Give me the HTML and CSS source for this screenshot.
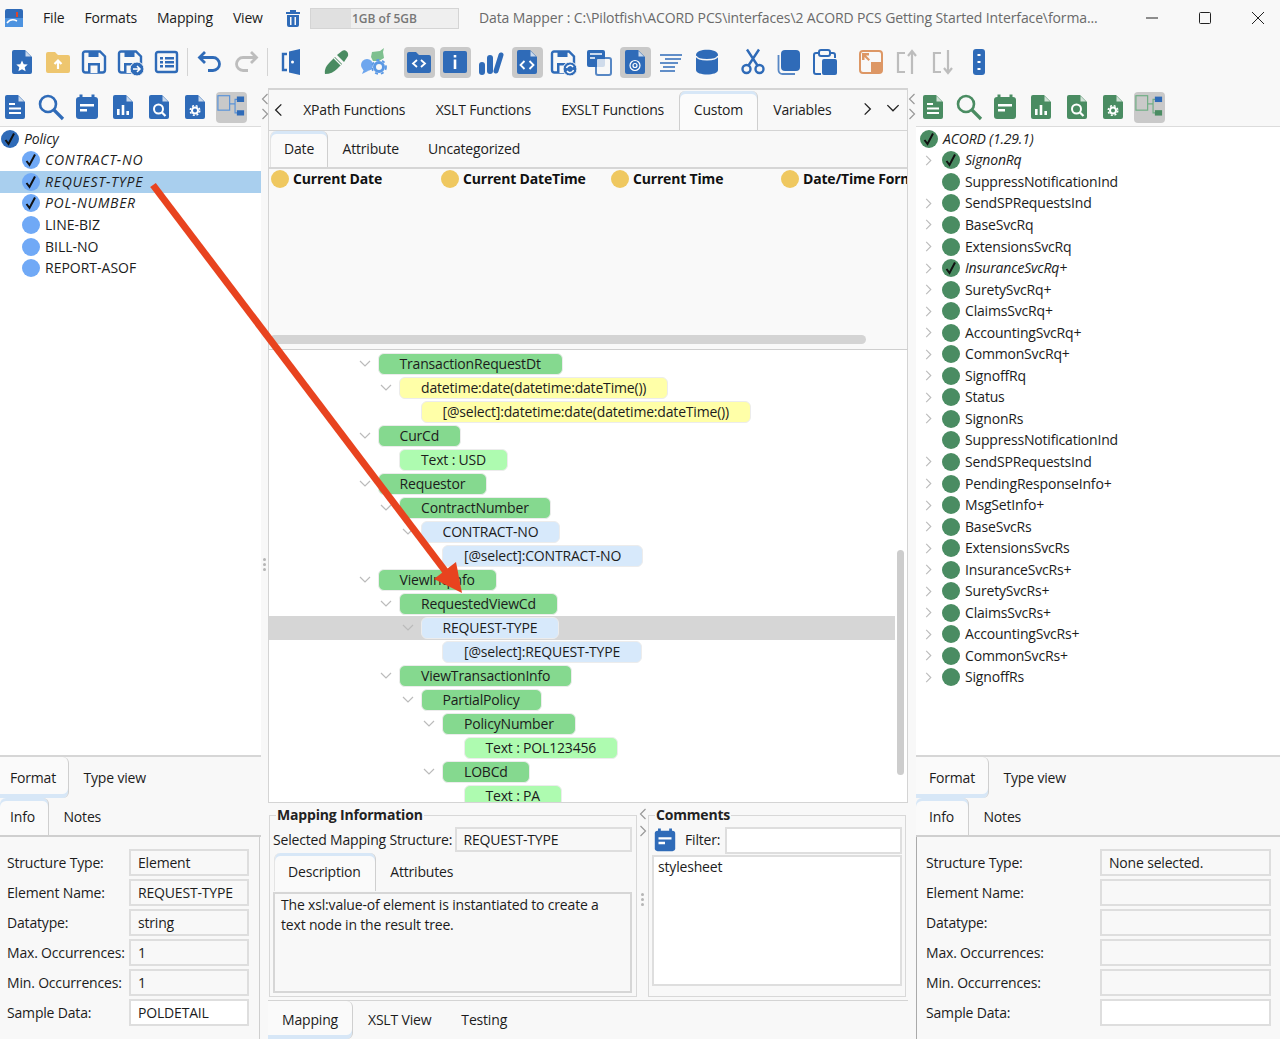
FILE: index.html
```html
<!DOCTYPE html>
<html lang="en">
<head>
  <meta charset="UTF-8" />
  <title>Data Mapper</title>
  <link rel="stylesheet" href="styles.css">
</head>
<body>
  <svg class="defs" width="0" height="0">
    <defs>
      <symbol id="dot" viewBox="0 0 18 18"><circle cx="9" cy="9" r="9" fill="currentColor"/></symbol>
      <symbol id="dot-check" viewBox="0 0 18 18"><circle cx="9" cy="9" r="9" fill="currentColor"/><path d="M4.5 10l3 4L13 3.5" fill="none" stroke="#111" stroke-width="2"/></symbol>
      <symbol id="chev-d" viewBox="0 0 12 8"><path d="M1 1l5 5 5-5" fill="none" stroke="currentColor" stroke-width="1.2"/></symbol>
      <symbol id="chev-r" viewBox="0 0 8 12"><path d="M1.5 1l5 5-5 5" fill="none" stroke="currentColor" stroke-width="1.2"/></symbol>
      <symbol id="chev-l" viewBox="0 0 8 12"><path d="M6.5 1l-5 5 5 5" fill="none" stroke="currentColor" stroke-width="1.2"/></symbol>

      <symbol id="file" viewBox="0 0 28 28"><path d="M6 2h11l7 7v15a2 2 0 0 1-2 2H6a2 2 0 0 1-2-2V4a2 2 0 0 1 2-2z" fill="currentColor"/><path d="M17.5 3l5.500 5.500h-5.500z" fill="#fff" opacity=".75"/></symbol>
      <symbol id="i-star" viewBox="0 0 28 28"><use href="#file"/><path d="M14 12.500l1.700 3.700 4 .4-3 2.700.9 3.900-3.600-2-3.600 2 .9-3.900-3-2.700 4-.4z" fill="#fff"/></symbol>
      <symbol id="i-folder" viewBox="0 0 28 28"><path d="M2 6a2 2 0 0 1 2-2h7l3 3h10a2 2 0 0 1 2 2v14a2 2 0 0 1-2 2H4a2 2 0 0 1-2-2z" fill="#eec66f"/><path d="M14 21v-8M10.500 16l3.500-3.500 3.500 3.500" fill="none" stroke="#fff" stroke-width="2.200"/></symbol>
      <symbol id="i-save" viewBox="0 0 28 28"><path d="M5 3.500h15l5 5V22a2.500 2.500 0 0 1-2.500 2.500h-17A2.500 2.500 0 0 1 3 22V5.500a2 2 0 0 1 2-2z" fill="none" stroke="currentColor" stroke-width="2.400"/><path d="M8.500 3h10v6h-10zM8 15h12v9H8z" fill="currentColor"/><path d="M10.500 17.500h7V25h-7z" fill="#f8f8f8"/></symbol>
      <symbol id="i-saveas" viewBox="0 0 28 28"><use href="#i-save"/><circle cx="21" cy="21" r="7" fill="currentColor" stroke="#f8f8f8"/><path d="M17 21h7M21 18l3 3-3 3" fill="none" stroke="#fff" stroke-width="1.500"/></symbol>
      <symbol id="i-savesync" viewBox="0 0 28 28"><use href="#i-save"/><circle cx="21" cy="21" r="7" fill="currentColor" stroke="#f8f8f8"/><path d="M17.500 20a3.600 3.600 0 0 1 6.500-1M24.500 22a3.600 3.600 0 0 1-6.500 1" fill="none" stroke="#fff" stroke-width="1.500"/></symbol>
      <symbol id="i-list" viewBox="0 0 28 28"><rect x="4" y="4" width="21" height="20" rx="2" fill="none" stroke="currentColor" stroke-width="2.400"/><path d="M8 9h3v2.500H8zM8 13h3v2.500H8zM8 17h3v2.500H8zM13 9h9v2.500h-9zM13 13h9v2.500h-9zM13 17h9v2.500h-9z" fill="currentColor"/></symbol>
      <symbol id="i-undo" viewBox="0 0 28 28"><path d="M9 4L3.500 9.500 9 15M4 9.500h13a6.500 6.500 0 0 1 0 13h-5" fill="none" stroke="currentColor" stroke-width="2.800"/></symbol>
      <symbol id="i-redo" viewBox="0 0 28 28"><path d="M19 4l5.500 5.500L19 15M24 9.500H11a6.500 6.500 0 0 0 0 13h5" fill="none" stroke="currentColor" stroke-width="2.800"/></symbol>
      <symbol id="i-door" viewBox="0 0 28 28"><path d="M10 6H6v16h4" fill="none" stroke="currentColor" stroke-width="2.400"/><path d="M12 3.500l11-2.500v26l-11-2.500z" fill="currentColor"/><circle cx="15.500" cy="14" r="1.500" fill="#fff"/></symbol>
      <symbol id="i-dropper" viewBox="0 0 28 28"><path d="M2 26c-1-5 2-9 5-12l5-5 7 7-5 5c-3 3-7 5-12 5z" fill="#4a8c62"/><path d="M14 7l5-4c3-2 7 1 6 5l-4 6z" fill="#4a8c62"/><path d="M11 10l7 7" stroke="#f8f8f8" stroke-width="1.200"/></symbol>
      <symbol id="i-chat" viewBox="0 0 28 28"><path d="M13 4l8-1 4-3-1 4 1 6-5 3h-6l-2-4z" fill="#7ec08f"/><circle cx="8" cy="17" r="6" fill="#6ea6ee"/><path d="M5 21l-2 5 6-3z" fill="#6ea6ee"/><circle cx="20" cy="19" r="4.500" fill="none" stroke="#5a98e4" stroke-width="3"/><circle cx="20" cy="19" r="7" fill="none" stroke="#5a98e4" stroke-width="1.800" stroke-dasharray="3 3"/></symbol>
      <symbol id="i-fcode" viewBox="0 0 28 28"><path d="M2 6a2 2 0 0 1 2-2h7l3 3h10a2 2 0 0 1 2 2v14a2 2 0 0 1-2 2H4a2 2 0 0 1-2-2z" fill="currentColor"/><path d="M12 12l-4 3.500 4 3.500M16 12l4 3.500-4 3.500" fill="none" stroke="#fff" stroke-width="1.800"/></symbol>
      <symbol id="i-info" viewBox="0 0 28 28"><rect x="2" y="3" width="24" height="22" rx="2" fill="currentColor"/><path d="M12.700 7h2.600v2.600h-2.600zM12.700 11.500h2.600V21h-2.600z" fill="#fff"/></symbol>
      <symbol id="i-bars" viewBox="0 0 28 28"><g fill="none" stroke="currentColor" stroke-linecap="round"><path d="M5 24v-7" stroke-width="6"/><path d="M13 23V10" stroke-width="6"/><path d="M19 23L24 7" stroke-width="5"/></g></symbol>
      <symbol id="i-filecode" viewBox="0 0 28 28"><use href="#file"/><path d="M11.500 13l-4 4 4 4M16.500 13l4 4-4 4" fill="none" stroke="#fff" stroke-width="1.800"/></symbol>
      <symbol id="i-docs" viewBox="0 0 28 28"><rect x="2" y="2" width="18" height="17" rx="2" fill="currentColor"/><path d="M5 6h12M5 10h5" stroke="#fff" stroke-width="1.500"/><rect x="11" y="10" width="15" height="17" rx="2" fill="#f8f8f8" stroke="currentColor" stroke-width="2" opacity=".8"/></symbol>
      <symbol id="i-fileat" viewBox="0 0 28 28"><use href="#file"/><circle cx="14" cy="17.500" r="5" fill="none" stroke="#fff" stroke-width="1.200"/><circle cx="14" cy="17.500" r="2" fill="none" stroke="#fff" stroke-width="1.200"/></symbol>
      <symbol id="i-lines" viewBox="0 0 28 28"><path d="M3 7h22M8 11h16M3 15h18M6 19h12M3 23h15" stroke="currentColor" stroke-width="1.300"/></symbol>
      <symbol id="i-db" viewBox="0 0 28 28"><path d="M3 7c0-7 22-7 22 0v15c0 6-22 6-22 0z" fill="currentColor"/><path d="M3 8c2 5 20 5 22 0" fill="none" stroke="#f8f8f8" stroke-width="1.500"/></symbol>
      <symbol id="i-cut" viewBox="0 0 28 28"><g fill="none" stroke="currentColor" stroke-width="2.400"><circle cx="7.500" cy="21" r="4"/><circle cx="20.500" cy="21" r="4"/><path d="M9.500 17.500L20 1.500M18.500 17.500L8 1.500"/></g></symbol>
      <symbol id="i-copy" viewBox="0 0 28 28"><rect x="6" y="2" width="19" height="21" rx="4" fill="currentColor"/><path d="M3.500 7v15a4 4 0 0 0 4 4H20" fill="none" stroke="currentColor" stroke-width="1.800" opacity=".8"/></symbol>
      <symbol id="i-paste" viewBox="0 0 28 28"><path d="M8 5H5a2 2 0 0 0-2 2v17a2 2 0 0 0 2 2h5M20 5h2a2 2 0 0 1 2 2v3" fill="none" stroke="currentColor" stroke-width="2"/><rect x="8" y="2" width="11" height="6" rx="2" fill="none" stroke="currentColor" stroke-width="2"/><rect x="11" y="11" width="15" height="16" rx="2" fill="currentColor"/></symbol>
      <symbol id="i-expand" viewBox="0 0 28 28"><rect x="3" y="3" width="22" height="22" rx="3" fill="none" stroke="#dd9765" stroke-width="2"/><path d="M14 14h11v9a2 2 0 0 1-2 2h-9z" fill="#dd9765"/><path d="M5 5h7v2.500H9l4 4-1.500 1.500-4-4v3H5z" fill="#dd9765"/></symbol>
      <symbol id="i-mvup" viewBox="0 0 28 28"><path d="M12 5H5v19h7" fill="none" stroke="currentColor" stroke-width="2.200"/><path d="M19 26V4M15 8l4-5 4 5" fill="none" stroke="currentColor" stroke-width="2.200"/></symbol>
      <symbol id="i-mvdn" viewBox="0 0 28 28"><path d="M12 5H5v19h7" fill="none" stroke="currentColor" stroke-width="2.200"/><path d="M19 2v22M15 20l4 5 4-5" fill="none" stroke="currentColor" stroke-width="2.200"/></symbol>
      <symbol id="i-tall" viewBox="0 0 28 28"><rect x="8" y="1" width="12" height="26" rx="3" fill="currentColor"/><path d="M12.500 6h3v2h-3zM12.500 13h3v2h-3zM12.500 20h3v2h-3z" fill="#fff"/></symbol>
      <symbol id="i-doc" viewBox="0 0 28 28"><use href="#file"/><path d="M8 11h6M8 15.500h12M8 20h12" stroke="#fff" stroke-width="2.200"/></symbol>
      <symbol id="i-search" viewBox="0 0 28 28"><circle cx="11" cy="11" r="8" fill="none" stroke="currentColor" stroke-width="2.600"/><path d="M17 17l9 9" stroke="currentColor" stroke-width="3.200"/></symbol>
      <symbol id="i-cal" viewBox="0 0 28 28"><rect x="3" y="4" width="22" height="22" rx="3" fill="currentColor"/><path d="M8 1.500v5M20 1.500v5" stroke="currentColor" stroke-width="3"/><path d="M7 11h14v2.500H7zM7 16h7v2.500H7z" fill="#fff"/></symbol>
      <symbol id="i-fchart" viewBox="0 0 28 28"><use href="#file"/><path d="M8 16h2.600v6H8zM12.700 12h2.600v10h-2.600zM17.400 18H20v4h-2.600z" fill="#fff"/></symbol>
      <symbol id="i-fsearch" viewBox="0 0 28 28"><use href="#file"/><circle cx="13.500" cy="16" r="4.500" fill="none" stroke="#fff" stroke-width="2"/><path d="M17 19.500l3.500 3.500" stroke="#fff" stroke-width="2.200"/></symbol>
      <symbol id="i-fgear" viewBox="0 0 28 28"><use href="#file"/><circle cx="14" cy="17.500" r="3" fill="none" stroke="#fff" stroke-width="2"/><circle cx="14" cy="17.500" r="4.800" fill="none" stroke="#fff" stroke-width="1.400" stroke-dasharray="2 1.800"/></symbol>
      <symbol id="i-tree-b" viewBox="0 0 31 31"><g fill="none" stroke="#5a93d8" stroke-width="1.300"><rect x="1" y="3" width="13" height="16"/><path d="M14 12h6M20 12V7h3M20 12v10h3"/></g><path d="M22 4h8v6h-8zM22 19h8v6h-8z" fill="#2f6bb8"/></symbol>
      <symbol id="i-tree-g" viewBox="0 0 31 31"><g fill="none" stroke="#6fae84" stroke-width="1.300"><rect x="1" y="3" width="13" height="16"/><path d="M14 12h6M20 12V7h3M20 12v10h3"/></g><path d="M22 4h8v6h-8z" fill="#2f6bb8"/><path d="M22 19h8v6h-8z" fill="#4a8c62"/></symbol>
      <symbol id="i-trash" viewBox="0 0 16 18"><path d="M5 1h6v2h4v2H1V3h4zM2 6h12v10a2 2 0 0 1-2 2H4a2 2 0 0 1-2-2zM5 8v8h1.500V8zM9.500 8v8H11V8z" fill="currentColor" fill-rule="evenodd"/></symbol>
    </defs>
  </svg>

  <header class="titlebar">
    <svg class="appicon" viewBox="0 0 18 18"><rect width="18" height="18" rx="2" fill="#2f6bb8"/><path d="M0 9h18v9H0z" fill="#4d93e0"/><path d="M2 14c3-4 6-4 10-2" fill="none" stroke="#fff" stroke-width="1.500"/><path d="M11 3h2v5h-2z" fill="#d9452f"/></svg>
    <nav class="menu">
      <span>File</span><span>Formats</span><span>Mapping</span><span>View</span>
    </nav>
    <svg class="trash"><use href="#i-trash"/></svg>
    <div class="memory"><div class="memory-used"></div><span>1GB of 5GB</span></div>
    <div class="doc-title">Data Mapper : C:\Pilotfish\ACORD PCS\interfaces\2 ACORD PCS Getting Started Interface\forma...</div>
    <div class="winctl">
      <svg viewBox="0 0 12 12"><path d="M0 6h12" stroke="#222" fill="none"/></svg>
      <svg viewBox="0 0 12 12"><rect x=".5" y=".5" width="11" height="11" rx="1" stroke="#222" fill="none"/></svg>
      <svg viewBox="0 0 12 12"><path d="M0 0l12 12M12 0L0 12" stroke="#222" fill="none"/></svg>
    </div>
  </header>

  <div class="toolbar">
    <svg class="ic"><use href="#i-star"/></svg>
    <svg class="ic"><use href="#i-folder"/></svg>
    <svg class="ic"><use href="#i-save"/></svg>
    <svg class="ic"><use href="#i-saveas"/></svg>
    <svg class="ic"><use href="#i-list"/></svg>
    <i class="sep"></i>
    <svg class="ic"><use href="#i-undo"/></svg>
    <svg class="ic off"><use href="#i-redo"/></svg>
    <i class="sep sep-wide"></i>
    <svg class="ic"><use href="#i-door"/></svg>
    <i class="sp"></i>
    <svg class="ic"><use href="#i-dropper"/></svg>
    <svg class="ic"><use href="#i-chat"/></svg>
    <i class="sp"></i>
    <span class="ic-on"><svg><use href="#i-fcode"/></svg></span>
    <span class="ic-on"><svg><use href="#i-info"/></svg></span>
    <svg class="ic"><use href="#i-bars"/></svg>
    <span class="ic-on"><svg><use href="#i-filecode"/></svg></span>
    <svg class="ic"><use href="#i-savesync"/></svg>
    <svg class="ic"><use href="#i-docs"/></svg>
    <span class="ic-on"><svg><use href="#i-fileat"/></svg></span>
    <svg class="ic"><use href="#i-lines"/></svg>
    <svg class="ic"><use href="#i-db"/></svg>
    <i class="sp"></i>
    <svg class="ic"><use href="#i-cut"/></svg>
    <svg class="ic"><use href="#i-copy"/></svg>
    <svg class="ic"><use href="#i-paste"/></svg>
    <i class="sp"></i>
    <svg class="ic"><use href="#i-expand"/></svg>
    <svg class="ic off"><use href="#i-mvup"/></svg>
    <svg class="ic off"><use href="#i-mvdn"/></svg>
    <svg class="ic"><use href="#i-tall"/></svg>
  </div>

  <main class="main">
    <!-- source side -->
    <section class="side">
      <div class="side-tools">
        <svg class="ic"><use href="#i-doc"/></svg>
        <svg class="ic"><use href="#i-search"/></svg>
        <svg class="ic"><use href="#i-cal"/></svg>
        <svg class="ic"><use href="#i-fchart"/></svg>
        <svg class="ic"><use href="#i-fsearch"/></svg>
        <svg class="ic"><use href="#i-fgear"/></svg>
        <span class="ic-on"><svg><use href="#i-tree-b"/></svg></span>
      </div>
      <div class="tree">
        <div class="row r0 italic navy"><svg class="dot"><use href="#dot-check"/></svg>Policy</div>
        <div class="row r1 italic sky"><svg class="dot"><use href="#dot-check"/></svg>CONTRACT-NO</div>
        <div class="row r1 italic sky picked"><svg class="dot"><use href="#dot-check"/></svg>REQUEST-TYPE</div>
        <div class="row r1 italic sky"><svg class="dot"><use href="#dot-check"/></svg>POL-NUMBER</div>
        <div class="row r1 sky"><svg class="dot"><use href="#dot"/></svg>LINE-BIZ</div>
        <div class="row r1 sky"><svg class="dot"><use href="#dot"/></svg>BILL-NO</div>
        <div class="row r1 sky"><svg class="dot"><use href="#dot"/></svg>REPORT-ASOF</div>
      </div>
      <div class="tabs tabs-fmt">
        <span class="tab on tint-b">Format</span><span class="tab">Type view</span>
      </div>
      <div class="tabs tabs-info">
        <span class="tab on tint-t">Info</span><span class="tab">Notes</span>
      </div>
      <div class="form">
        <label>Structure Type:</label><div class="field">Element</div>
        <label>Element Name:</label><div class="field">REQUEST-TYPE</div>
        <label>Datatype:</label><div class="field">string</div>
        <label>Max. Occurrences:</label><div class="field">1</div>
        <label>Min. Occurrences:</label><div class="field">1</div>
        <label>Sample Data:</label><div class="field white">POLDETAIL</div>
      </div>
    </section>

    <div class="split">
      <svg class="chev"><use href="#chev-l"/></svg>
      <svg class="chev"><use href="#chev-r"/></svg>
      <div class="grip"><b></b><b></b><b></b></div>
    </div>

    <!-- mapping area -->
    <section class="center">
      <div class="tabs tabs-fn">
        <svg class="nav"><use href="#chev-l"/></svg>
        <span class="tab">XPath Functions</span>
        <span class="tab">XSLT Functions</span>
        <span class="tab">EXSLT Functions</span>
        <span class="tab on tint-t">Custom</span>
        <span class="tab">Variables</span>
        <svg class="nav nav-next"><use href="#chev-r"/></svg>
        <svg class="nav-down"><use href="#chev-d"/></svg>
      </div>
      <div class="palette">
        <div class="tabs tabs-cat">
          <span class="tab on tint-t">Date</span><span class="tab">Attribute</span><span class="tab">Uncategorized</span>
        </div>
        <div class="fn-list">
          <div class="fn"><svg class="dot"><use href="#dot"/></svg>Current Date</div>
          <div class="fn"><svg class="dot"><use href="#dot"/></svg>Current DateTime</div>
          <div class="fn"><svg class="dot"><use href="#dot"/></svg>Current Time</div>
          <div class="fn"><svg class="dot"><use href="#dot"/></svg>Date/Time Format</div>
        </div>
        <div class="hscroll"><div class="hthumb"></div></div>
      </div>
      <div class="xslt">
        <div class="vthumb"></div>
        <div class="n d0"><svg class="ch"><use href="#chev-d"/></svg><span class="pill green">TransactionRequestDt</span></div>
        <div class="n d1"><svg class="ch"><use href="#chev-d"/></svg><span class="pill yellow">datetime:date(datetime:dateTime())</span></div>
        <div class="n d2"><span class="pill yellow">[@select]:datetime:date(datetime:dateTime())</span></div>
        <div class="n d0"><svg class="ch"><use href="#chev-d"/></svg><span class="pill green">CurCd</span></div>
        <div class="n d1"><span class="pill lime">Text : USD</span></div>
        <div class="n d0"><svg class="ch"><use href="#chev-d"/></svg><span class="pill green">Requestor</span></div>
        <div class="n d1"><svg class="ch"><use href="#chev-d"/></svg><span class="pill green">ContractNumber</span></div>
        <div class="n d2"><svg class="ch"><use href="#chev-d"/></svg><span class="pill blue">CONTRACT-NO</span></div>
        <div class="n d3"><span class="pill blue">[@select]:CONTRACT-NO</span></div>
        <div class="n d0"><svg class="ch"><use href="#chev-d"/></svg><span class="pill green">ViewInqInfo</span></div>
        <div class="n d1"><svg class="ch"><use href="#chev-d"/></svg><span class="pill green">RequestedViewCd</span></div>
        <div class="n d2 cur"><svg class="ch"><use href="#chev-d"/></svg><span class="pill blue">REQUEST-TYPE</span></div>
        <div class="n d3"><span class="pill blue">[@select]:REQUEST-TYPE</span></div>
        <div class="n d1"><svg class="ch"><use href="#chev-d"/></svg><span class="pill green">ViewTransactionInfo</span></div>
        <div class="n d2"><svg class="ch"><use href="#chev-d"/></svg><span class="pill green">PartialPolicy</span></div>
        <div class="n d3"><svg class="ch"><use href="#chev-d"/></svg><span class="pill green">PolicyNumber</span></div>
        <div class="n d4"><span class="pill lime">Text : POL123456</span></div>
        <div class="n d3"><svg class="ch"><use href="#chev-d"/></svg><span class="pill green">LOBCd</span></div>
        <div class="n d4"><span class="pill lime">Text : PA</span></div>
      </div>
      <div class="details">
        <fieldset class="box box-map">
          <legend>Mapping Information</legend>
          <div class="sel-line"><span>Selected Mapping Structure:</span><div class="field">REQUEST-TYPE</div></div>
          <div class="tabs tabs-desc">
            <span class="tab on tint-t">Description</span><span class="tab">Attributes</span>
          </div>
          <div class="desc">The xsl:value-of element is instantiated to create a text node in the result tree.</div>
        </fieldset>
        <div class="split split-in">
          <svg class="chev"><use href="#chev-l"/></svg>
          <svg class="chev"><use href="#chev-r"/></svg>
          <div class="grip"><b></b><b></b><b></b></div>
        </div>
        <fieldset class="box box-com">
          <legend>Comments</legend>
          <div class="filter"><svg class="ic-sm"><use href="#i-cal"/></svg><span>Filter:</span><div class="field white"></div></div>
          <div class="comment">stylesheet</div>
        </fieldset>
      </div>
      <div class="tabs tabs-bottom">
        <span class="tab on tint-b">Mapping</span><span class="tab">XSLT View</span><span class="tab">Testing</span>
      </div>
    </section>

    <div class="split split-r">
      <svg class="chev"><use href="#chev-l"/></svg>
      <svg class="chev"><use href="#chev-r"/></svg>
    </div>

    <!-- target side -->
    <section class="side side-r">
      <div class="side-tools">
        <svg class="ic"><use href="#i-doc"/></svg>
        <svg class="ic"><use href="#i-search"/></svg>
        <svg class="ic"><use href="#i-cal"/></svg>
        <svg class="ic"><use href="#i-fchart"/></svg>
        <svg class="ic"><use href="#i-fsearch"/></svg>
        <svg class="ic"><use href="#i-fgear"/></svg>
        <span class="ic-on"><svg><use href="#i-tree-g"/></svg></span>
      </div>
      <div class="tree">
        <div class="row r0 italic"><svg class="dot"><use href="#dot-check"/></svg>ACORD (1.29.1)</div>
        <div class="row italic"><svg class="exp"><use href="#chev-r"/></svg><svg class="dot"><use href="#dot-check"/></svg>SignonRq</div>
        <div class="row"><i class="exp"></i><svg class="dot"><use href="#dot"/></svg>SuppressNotificationInd</div>
        <div class="row"><svg class="exp"><use href="#chev-r"/></svg><svg class="dot"><use href="#dot"/></svg>SendSPRequestsInd</div>
        <div class="row"><svg class="exp"><use href="#chev-r"/></svg><svg class="dot"><use href="#dot"/></svg>BaseSvcRq</div>
        <div class="row"><svg class="exp"><use href="#chev-r"/></svg><svg class="dot"><use href="#dot"/></svg>ExtensionsSvcRq</div>
        <div class="row italic"><svg class="exp"><use href="#chev-r"/></svg><svg class="dot"><use href="#dot-check"/></svg>InsuranceSvcRq+</div>
        <div class="row"><svg class="exp"><use href="#chev-r"/></svg><svg class="dot"><use href="#dot"/></svg>SuretySvcRq+</div>
        <div class="row"><svg class="exp"><use href="#chev-r"/></svg><svg class="dot"><use href="#dot"/></svg>ClaimsSvcRq+</div>
        <div class="row"><svg class="exp"><use href="#chev-r"/></svg><svg class="dot"><use href="#dot"/></svg>AccountingSvcRq+</div>
        <div class="row"><svg class="exp"><use href="#chev-r"/></svg><svg class="dot"><use href="#dot"/></svg>CommonSvcRq+</div>
        <div class="row"><svg class="exp"><use href="#chev-r"/></svg><svg class="dot"><use href="#dot"/></svg>SignoffRq</div>
        <div class="row"><svg class="exp"><use href="#chev-r"/></svg><svg class="dot"><use href="#dot"/></svg>Status</div>
        <div class="row"><svg class="exp"><use href="#chev-r"/></svg><svg class="dot"><use href="#dot"/></svg>SignonRs</div>
        <div class="row"><i class="exp"></i><svg class="dot"><use href="#dot"/></svg>SuppressNotificationInd</div>
        <div class="row"><svg class="exp"><use href="#chev-r"/></svg><svg class="dot"><use href="#dot"/></svg>SendSPRequestsInd</div>
        <div class="row"><svg class="exp"><use href="#chev-r"/></svg><svg class="dot"><use href="#dot"/></svg>PendingResponseInfo+</div>
        <div class="row"><svg class="exp"><use href="#chev-r"/></svg><svg class="dot"><use href="#dot"/></svg>MsgSetInfo+</div>
        <div class="row"><svg class="exp"><use href="#chev-r"/></svg><svg class="dot"><use href="#dot"/></svg>BaseSvcRs</div>
        <div class="row"><svg class="exp"><use href="#chev-r"/></svg><svg class="dot"><use href="#dot"/></svg>ExtensionsSvcRs</div>
        <div class="row"><svg class="exp"><use href="#chev-r"/></svg><svg class="dot"><use href="#dot"/></svg>InsuranceSvcRs+</div>
        <div class="row"><svg class="exp"><use href="#chev-r"/></svg><svg class="dot"><use href="#dot"/></svg>SuretySvcRs+</div>
        <div class="row"><svg class="exp"><use href="#chev-r"/></svg><svg class="dot"><use href="#dot"/></svg>ClaimsSvcRs+</div>
        <div class="row"><svg class="exp"><use href="#chev-r"/></svg><svg class="dot"><use href="#dot"/></svg>AccountingSvcRs+</div>
        <div class="row"><svg class="exp"><use href="#chev-r"/></svg><svg class="dot"><use href="#dot"/></svg>CommonSvcRs+</div>
        <div class="row"><svg class="exp"><use href="#chev-r"/></svg><svg class="dot"><use href="#dot"/></svg>SignoffRs</div>
      </div>
      <div class="tabs tabs-fmt">
        <span class="tab on tint-b">Format</span><span class="tab">Type view</span>
      </div>
      <div class="tabs tabs-info">
        <span class="tab on tint-t">Info</span><span class="tab">Notes</span>
      </div>
      <div class="form">
        <label>Structure Type:</label><div class="field">None selected.</div>
        <label>Element Name:</label><div class="field"></div>
        <label>Datatype:</label><div class="field"></div>
        <label>Max. Occurrences:</label><div class="field"></div>
        <label>Min. Occurrences:</label><div class="field"></div>
        <label>Sample Data:</label><div class="field white"></div>
      </div>
    </section>
  </main>

  <!-- annotation drawn over the screenshot -->
  <svg class="callout" viewBox="0 0 1280 1039">
    <path d="M153 185L446 572" stroke="#e8431f" stroke-width="7" fill="none"/>
    <path d="M456 562L462 593L434 579z" fill="#e8431f"/>
  </svg>
</body>
</html>
```

FILE: styles.css
```css
* {
  box-sizing: border-box;
}

html, body {
  height: 100%;
}

body {
  margin: 0;
  overflow: hidden;
  position: relative;
  background: #f8f8f8;
  color: #1c1c1c;
  font-family: "Open Sans", "Noto Sans", sans-serif;
  font-size: 14px;
  letter-spacing: -0.18px;
  line-height: 20px;
}

.defs {
  position: absolute;
}

/* title bar */
.titlebar {
  display: flex;
  align-items: center;
  height: 36px;
}

.appicon {
  width: 18px;
  height: 18px;
  margin-left: 5px;
}

.menu {
  display: flex;
  gap: 20px;
  margin-left: 20px;
  width: 264px;
}

.trash {
  width: 16px;
  height: 18px;
  color: #2f6bb8;
  margin-left: -22px;
}

.memory {
  position: relative;
  width: 149px;
  height: 21px;
  margin-left: 9px;
  background: #efefef;
  border: 1px solid #d4d4d4;
  font-size: 12px;
  font-weight: 600;
  letter-spacing: 0;
  color: #777;
  line-height: 19px;
}

.memory-used {
  width: 40px;
  height: 100%;
  background: #e0e0e0;
}

.memory span {
  position: absolute;
  left: 41px;
  top: 0;
}

.doc-title {
  margin-left: 20px;
  width: 640px;
  white-space: nowrap;
  letter-spacing: -0.12px;
  color: #6a6a6a;
  overflow: hidden;
}

.winctl {
  display: flex;
  gap: 41px;
  margin-left: 27px;
}

.winctl svg {
  width: 12px;
  height: 12px;
}

/* icon strips */
.toolbar {
  display: flex;
  align-items: center;
  height: 52px;
  padding-left: 4px;
  color: #2f6bb8;
}

.ic {
  width: 36px;
  height: 28px;
  flex: none;
}

.ic.off {
  color: #bdbdbd;
}

.ic-on {
  display: flex;
  align-items: center;
  justify-content: center;
  flex: none;
  width: 31px;
  height: 31px;
  margin: 0 2.5px;
  border-radius: 4px;
  background: #c9c9c9;
}

.ic-on svg {
  width: 28px;
  height: 28px;
}

.sep {
  flex: none;
  width: 1px;
  height: 28px;
  margin: 0 4px 0 3px;
  background: #d4d4d4;
}

.sep-wide {
  margin-right: 5px;
}

.sp {
  flex: none;
  width: 10px;
}

.main {
  display: grid;
  grid-template-columns: 261px 7px 640px 8px 364px;
  height: 951px;
}

/* side panes */
.side {
  display: flex;
  flex-direction: column;
  min-width: 0;
}

.side-tools {
  display: flex;
  align-items: center;
  height: 38px;
  margin-left: -3px;
  color: #2f6bb8;
}

.side-r .side-tools {
  color: #4a8c62;
  padding-left: 2px;
}

.tree {
  height: 631px;
  padding-top: 1px;
  background: #fff;
  border-top: 1px solid #dcdcdc;
  border-bottom: 2px solid #d6d6d6;
  overflow: hidden;
}

.row {
  display: flex;
  align-items: center;
  gap: 5px;
  height: 21.56px;
  padding-left: 4px;
  white-space: nowrap;
}

.r0 {
  padding-left: 1px;
}

.r1 {
  padding-left: 22px;
  letter-spacing: 0;
}

.r1.italic {
  letter-spacing: 0.7px;
}

.side-r .r0 {
  padding-left: 4px;
}

.italic {
  font-style: italic;
}

.row .dot {
  color: #4a8c62;
}

.navy .dot {
  color: #2f6bb8;
}

.sky .dot {
  color: #70a9f6;
}

.picked {
  background: #a9cfee;
}

.dot {
  flex: none;
  width: 18px;
  height: 18px;
}

.exp {
  flex: none;
  width: 17px;
  height: 11px;
  color: #bbb;
}

/* tabs */
.tabs {
  display: flex;
  align-items: stretch;
  flex: none;
}

.tab {
  display: flex;
  align-items: center;
  padding: 0 14.5px;
  white-space: nowrap;
}

.tab.on {
  background: #fafafa;
  border-right: 1px solid #cfcfcf;
  border-radius: 0 6px 6px 0;
}

.tint-t {
  box-shadow: inset 0 3px 0 #d7e7f7;
  border-radius: 6px 6px 0 0 !important;
}

.tint-b {
  box-shadow: inset 0 -4px 0 #d7e7f7;
}

.tabs-fmt {
  height: 41px;
}

.tabs-fmt .tab.on {
  padding: 0 13px 0 10px;
  width: 69px;
}

.tabs-info {
  height: 39px;
  border-bottom: 2px solid #cfcfcf;
}

.tabs-info .tab.on {
  padding: 0 13px 0 10px;
  width: 49px;
}

.side-r .tabs-fmt .tab.on {
  width: 73px;
  padding-left: 13px;
}

.side-r .tabs-info .tab.on {
  width: 53px;
  padding-left: 13px;
}

/* property forms */
.form {
  display: grid;
  grid-template-columns: 122px 120px;
  grid-auto-rows: 27px;
  row-gap: 3px;
  align-items: center;
  flex: 1;
  align-content: start;
  padding: 12px 0 0 7px;
  border-right: 1px solid #cfcfcf;
  margin-right: 1px;
}

.side-r .form {
  grid-template-columns: 174px 171px;
  padding-left: 9px;
  border: 0;
  border-left: 1px solid #aaa;
}

.field {
  height: 27px;
  padding: 0 7px;
  line-height: 24px;
  border: 2px solid #dedede;
  white-space: nowrap;
  overflow: hidden;
}

.field.white {
  background: #fff;
}

/* splitters */
.split {
  display: flex;
  flex-direction: column;
  align-items: center;
  color: #999;
  padding-top: 5px;
}

.chev {
  width: 8px;
  height: 12px;
  margin-bottom: 3px;
}

.grip {
  display: flex;
  flex-direction: column;
  gap: 2px;
  margin-top: 435px;
}

.grip b {
  width: 3px;
  height: 3px;
  border-radius: 50%;
  background: #b5b5b5;
}

/* centre column */
.center {
  display: flex;
  flex-direction: column;
  min-width: 0;
}

.tabs-fn {
  position: relative;
  height: 42px;
  padding-left: 5px;
  border-top: 2px solid #d4d4d4;
  border-left: 1px solid #d4d4d4;
  border-right: 1px solid #d4d4d4;
}

.tabs-fn .tab {
  padding: 0 15.2px;
}

.tabs-fn .tab.on {
  margin-top: 1px;
  padding: 0 14px 1px 13.5px;
  border-left: 1px solid #cfcfcf;
  background: #fbfbfb;
}

.nav {
  width: 9px;
  height: 14px;
  align-self: center;
  margin-right: 5px;
  color: #222;
}

.nav-next {
  position: absolute;
  left: 594px;
  top: 12px;
}

.nav-down {
  position: absolute;
  left: 617px;
  top: 14px;
  width: 14px;
  height: 9px;
  color: #222;
}

.palette {
  position: relative;
  height: 220px;
  border-left: 1px solid #d4d4d4;
  border-right: 1px solid #d4d4d4;
  border-top: 1px solid #d4d4d4;
  border-bottom: 2px solid #cfcfcf;
}

.tabs-cat {
  height: 38px;
  background: #f8f8f8;
  border-bottom: 2px solid #d6d6d6;
}

.tabs-cat .tab.on {
  width: 58px;
  margin-left: 1px;
  border-left: 1px solid #e4e4e4;
  padding-left: 13px;
}

.fn-list {
  display: flex;
  height: 180px;
  padding: 0 0 0 2px;
  overflow: hidden;
  background: #f9f9f9;
}

.fn {
  display: flex;
  align-items: center;
  flex: none;
  gap: 4px;
  width: 170px;
  height: 20px;
  font-weight: 700;
  color: #111;
  white-space: nowrap;
}

.fn .dot {
  color: #efc860;
}

.hscroll {
  position: absolute;
  left: 1px;
  right: 0;
  bottom: 3px;
  height: 10px;
}

.hthumb {
  width: 596px;
  height: 9px;
  border-radius: 5px;
  background: #d4d4d4;
}

.xslt {
  position: relative;
  height: 453px;
  padding-top: 2px;
  background: #fff;
  border-left: 1px solid #d4d4d4;
  border-right: 1px solid #d4d4d4;
  border-bottom: 1px solid #d4d4d4;
  overflow: hidden;
}

.vthumb {
  position: absolute;
  right: 3px;
  top: 200px;
  width: 7px;
  height: 225px;
  border-radius: 4px;
  background: #cdcdcd;
}

.n {
  position: relative;
  display: flex;
  align-items: center;
  height: 24px;
  white-space: nowrap;
}

.d0 { padding-left: 108.5px; }
.d1 { padding-left: 130px; }
.d2 { padding-left: 151.5px; }
.d3 { padding-left: 173px; }
.d4 { padding-left: 194.5px; }

.cur {
  background: #d6d6d6;
  margin-right: 12px;
}

.ch {
  position: absolute;
  width: 12px;
  height: 8px;
  top: 8px;
  margin-left: -19px;
  color: #bbb;
}

.pill {
  height: 22px;
  padding: 0 21px;
  line-height: 20px;
  border-radius: 6px;
  border: 1px solid #ececec;
}

.green { background: #85d98f; }
.lime { background: #aefbb0; }
.yellow { background: #ffffa8; }
.blue { background: #d7e9fb; }

/* bottom of centre column */
.details {
  display: flex;
  height: 197px;
  padding: 2px 0 0 1px;
}

.box {
  margin: 0;
  padding: 0 4px 0 3px;
  height: 192px;
  border: 1px solid #d8d8d8;
  min-width: 0;
}

.box legend {
  padding: 0 1px;
  margin-left: 3px;
  font-weight: 700;
  color: #222;
}

.box-map {
  width: 368px;
}

.box-com {
  width: 258px;
  padding: 0 3px;
}

.sel-line {
  display: flex;
  align-items: center;
  height: 27px;
  margin-top: 1px;
}

.sel-line span {
  flex: none;
  width: 181.5px;
  white-space: nowrap;
}

.sel-line .field {
  flex: 1;
  height: 25px;
  line-height: 21px;
}

.tabs-desc {
  height: 38px;
}

.tabs-desc .tab.on {
  margin-left: 1px;
  border-left: 1px solid #e4e4e4;
  padding: 0 14px 0 13px;
}

.desc {
  height: 101px;
  margin-top: 1px;
  padding: 1px 6px;
  border: 2px solid #d6d6d6;
}

.split-in {
  flex: none;
  width: 11px;
  padding-top: 3px;
}

.split-in .chev {
  margin-bottom: 5px;
}

.split-in .grip {
  margin-top: 51px;
}

.filter {
  display: flex;
  align-items: center;
  height: 28px;
  margin-top: 1px;
}

.filter span {
  margin: 0 5px 0 7px;
}

.ic-sm {
  flex: none;
  width: 26px;
  height: 26px;
  color: #2f6bb8;
}

.filter .field {
  flex: 1;
}

.comment {
  height: 131px;
  margin-top: 1px;
  padding: 0 4px;
  background: #fff;
  border: 2px solid #dedede;
}

.tabs-bottom {
  height: 39px;
  border-top: 1px solid #d4d4d4;
}

.tabs-bottom .tab {
  padding: 0 15px;
}

.tabs-bottom .tab.on {
  padding: 0 14px;
}

.callout {
  position: absolute;
  left: 0;
  top: 0;
  width: 1280px;
  height: 1039px;
  pointer-events: none;
}
```
